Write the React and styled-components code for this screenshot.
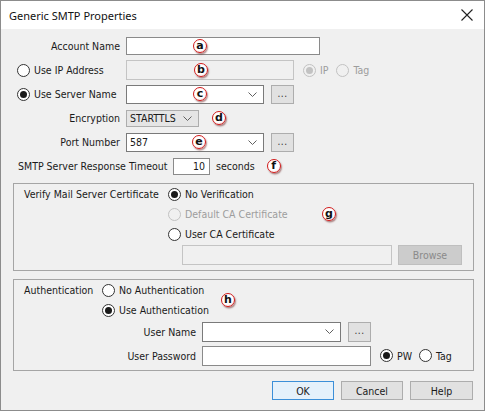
import React from "react";
import styled, { createGlobalStyle } from "styled-components";

const GlobalStyle = createGlobalStyle`
  html, body {
    margin: 0;
    padding: 0;
    background: #ffffff;
  }
  body {
    font-family: "DejaVu Sans Condensed", "Liberation Sans", Arial, sans-serif;
    font-size: 10.5px;
    color: #1a1a1a;
  }
`;

const Window = styled.div`
  width: 485px;
  height: 411px;
  box-sizing: border-box;
  border: 1px solid #8c8c8c;
  background: #f0f0f0;
  display: flex;
  flex-direction: column;
`;

const TitleBar = styled.div`
  height: 28px;
  flex: none;
  background: #ffffff;
  display: flex;
  align-items: center;
  justify-content: space-between;
  padding: 0 11px 0 8px;
  font-family: "Noto Sans", "Open Sans", sans-serif;
  font-size: 11px;
  color: #111;
`;

const Body = styled.div`
  flex: 1;
  padding-top: 5px;
  display: flex;
  flex-direction: column;
`;

const Row = styled.div`
  position: relative;
  display: flex;
  align-items: center;
  height: ${(p) => p.$h || 24}px;
  flex: none;
`;

const Label = styled.div`
  width: ${(p) => p.$w}px;
  box-sizing: border-box;
  padding-left: ${(p) => p.$pl || 0}px;
  margin-right: 6px;
  text-align: ${(p) => (p.$left ? "left" : "right")};
  white-space: nowrap;
  flex: none;
`;

const Input = styled.div`
  width: ${(p) => p.$w}px;
  height: ${(p) => p.$h || 18}px;
  box-sizing: border-box;
  border: 1px solid ${(p) => (p.$disabled ? "#c4c4c4" : "#8a8a8a")};
  background: ${(p) => (p.$disabled ? "#f0f0f0" : "#ffffff")};
  display: flex;
  align-items: center;
  justify-content: ${(p) => (p.$right ? "flex-end" : "flex-start")};
  padding: 0 4px 0 3px;
  flex: none;
`;

const Combo = styled(Input)`
  justify-content: space-between;
  padding: 0 6px 0 3px;
  background: ${(p) => (p.$flat ? "#e5e5e5" : "#ffffff")};
  border-color: ${(p) => (p.$flat ? "#adadad" : "#7a7a7a")};
`;

const Dots = styled.div`
  width: 23px;
  height: ${(p) => p.$h || 19}px;
  box-sizing: border-box;
  margin-left: 7px;
  border: 1px solid #adadad;
  background: #e1e1e1;
  display: flex;
  align-items: center;
  justify-content: center;
  font-size: 10px;
  letter-spacing: 0.5px;
  color: #333;
  padding-bottom: 2px;
  flex: none;
`;

const RadioItem = styled.div`
  display: flex;
  align-items: center;
  gap: 4px;
  margin-left: ${(p) => p.$ml || 0}px;
  color: ${(p) => (p.$disabled ? "#9d9d9d" : "#1a1a1a")};
  white-space: nowrap;
  flex: none;
`;

const Circle = styled.span`
  width: 13px;
  height: 13px;
  box-sizing: border-box;
  border-radius: 50%;
  border: 1px solid ${(p) => (p.$disabled ? "#c2c2c2" : "#333333")};
  background: ${(p) => (p.$disabled ? "#f0f0f0" : "#ffffff")};
  display: flex;
  align-items: center;
  justify-content: center;
  &::after {
    content: "";
    display: ${(p) => (p.$checked ? "block" : "none")};
    width: 7px;
    height: 7px;
    border-radius: 50%;
    background: ${(p) => (p.$disabled ? "#c2c2c2" : "#1a1a1a")};
  }
`;

const Badge = styled.span`
  position: ${(p) => (p.$inline ? "static" : "absolute")};
  left: ${(p) => p.$x}px;
  top: ${(p) => (p.$y != null ? `${p.$y}px` : "50%")};
  transform: ${(p) => (p.$y != null || p.$inline ? "none" : "translateY(-50%)")};
  margin-left: ${(p) => p.$ml || 0}px;
  width: 14px;
  height: 14px;
  box-sizing: border-box;
  border-radius: 50%;
  border: 1.5px solid #d11a1a;
  background: radial-gradient(circle at 40% 35%, #ffffff 55%, #f1e3e3 100%);
  box-shadow: 1px 1.5px 1.5px rgba(90, 0, 0, 0.45);
  display: flex;
  align-items: center;
  justify-content: center;
  font-family: "DejaVu Sans", sans-serif;
  font-size: 11px;
  font-weight: bold;
  line-height: 1;
  color: #111;
  padding-bottom: 1px;
  flex: none;
`;

const Group = styled.div`
  position: relative;
  margin: ${(p) => p.$mt}px 10px 0 12px;
  height: ${(p) => p.$h}px;
  box-sizing: border-box;
  border: 1px solid #a5a5a5;
  padding-left: 10px;
  display: flex;
  flex-direction: column;
`;

const Button = styled.div`
  width: ${(p) => p.$w || 62}px;
  height: ${(p) => p.$h || 19}px;
  box-sizing: border-box;
  border: 1px solid ${(p) => (p.$default ? "#3c8fd8" : p.$disabled ? "#bfbfbf" : "#adadad")};
  background: ${(p) => (p.$disabled ? "#cccccc" : p.$default ? "#e5f1fb" : "#e1e1e1")};
  color: ${(p) => (p.$disabled ? "#8a8a8a" : "#1a1a1a")};
  display: flex;
  align-items: center;
  justify-content: center;
  margin-left: ${(p) => p.$ml || 0}px;
  flex: none;
`;

const ButtonBar = styled.div`
  display: flex;
  justify-content: flex-end;
  gap: 7px;
  margin: 10px 11px 0 0;
`;

const Chevron = () => (
  <svg width="9" height="5" viewBox="0 0 9 5">
    <polyline points="0.5,0.5 4.5,4.5 8.5,0.5" fill="none" stroke="#606060" strokeWidth="1" />
  </svg>
);

const CloseIcon = () => (
  <svg width="12" height="12" viewBox="0 0 12 12">
    <path d="M0.5 0.5 L11.5 11.5 M11.5 0.5 L0.5 11.5" stroke="#222" strokeWidth="1.1" />
  </svg>
);

const Radio = ({ checked, disabled, children, ml }) => (
  <RadioItem $disabled={disabled} $ml={ml}>
    <Circle $checked={checked} $disabled={disabled} />
    {children}
  </RadioItem>
);

export default function App() {
  return (
    <>
      <GlobalStyle />
      <Window>
        <TitleBar>
          <span>Generic SMTP Properties</span>
          <CloseIcon />
        </TitleBar>
        <Body>
          <Row>
            <Label $w={119}>Account Name</Label>
            <Input $w={194} />
            <Badge $x={192}>a</Badge>
          </Row>
          <Row>
            <Label $w={119} $pl={16} $left>
              <Radio>Use IP Address</Radio>
            </Label>
            <Input $w={168} $h={20} $disabled />
            <Radio disabled checked ml={9}>IP</Radio>
            <Radio disabled ml={8}>Tag</Radio>
            <Badge $x={193}>b</Badge>
          </Row>
          <Row>
            <Label $w={119} $pl={16} $left>
              <Radio checked>Use Server Name</Radio>
            </Label>
            <Combo $w={138} $h={19}>
              <span />
              <Chevron />
            </Combo>
            <Dots>...</Dots>
            <Badge $x={192}>c</Badge>
          </Row>
          <Row>
            <Label $w={119}>Encryption</Label>
            <Combo $w={73} $h={17} $flat>
              <span>STARTTLS</span>
              <Chevron />
            </Combo>
            <Badge $inline $ml={13}>d</Badge>
          </Row>
          <Row>
            <Label $w={119}>Port Number</Label>
            <Combo $w={138} $h={19}>
              <span>587</span>
              <Chevron />
            </Combo>
            <Dots>...</Dots>
            <Badge $x={191}>e</Badge>
          </Row>
          <Row>
            <Label $w={166} $pl={17} $left>SMTP Server Response Timeout</Label>
            <Input $w={37} $h={17} $right>10</Input>
            <span style={{ marginLeft: 6 }}>seconds</span>
            <Badge $inline $ml={12}>f</Badge>
          </Row>

          <Group $mt={5} $h={88}>
            <Row $h={20}>
              <Label $w={138} $left>Verify Mail Server Certificate</Label>
              <Radio checked>No Verification</Radio>
            </Row>
            <Row $h={20}>
              <Label $w={138} />
              <Radio disabled>Default CA Certificate</Radio>
            </Row>
            <Row $h={20}>
              <Label $w={138} />
              <Radio>User CA Certificate</Radio>
            </Row>
            <Row $h={22}>
              <Label $w={152} />
              <Input $w={210} $h={20} $disabled />
              <Button $w={64} $h={20} $ml={6} $disabled>Browse</Button>
            </Row>
            <Badge $x={308} $y={23}>g</Badge>
          </Group>

          <Group $mt={8} $h={92}>
            <Row $h={20}>
              <Label $w={72} $left>Authentication</Label>
              <Radio>No Authentication</Radio>
            </Row>
            <Row $h={20}>
              <Label $w={72} />
              <Radio checked>Use Authentication</Radio>
            </Row>
            <Row $h={23}>
              <Label $w={172}>User Name</Label>
              <Combo $w={139} $h={20}>
                <span />
                <Chevron />
              </Combo>
              <Dots $h={20}>...</Dots>
            </Row>
            <Row $h={25}>
              <Label $w={172}>User Password</Label>
              <Input $w={169} $h={20} />
              <Radio checked ml={9}>PW</Radio>
              <Radio ml={7}>Tag</Radio>
            </Row>
            <Badge $x={207} $y={13}>h</Badge>
          </Group>

          <ButtonBar>
            <Button $default>OK</Button>
            <Button>Cancel</Button>
            <Button $w={63}>Help</Button>
          </ButtonBar>
        </Body>
      </Window>
    </>
  );
}
